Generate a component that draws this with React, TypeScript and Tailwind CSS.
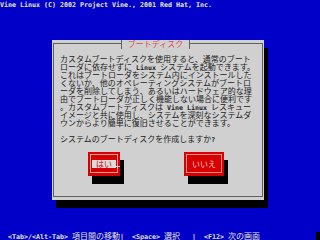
import React from "react";

const isLatin = (p: string) => /^[\x20-\x7e]+$/.test(p);

// text-mode line: ASCII runs are half-width (4px), everything else full-width (8px)
function Txt({ s, latin = "" }: { s: string; latin?: string }) {
  const parts = s.split(/([\x20-\x7e]+)/).filter(Boolean);
  return (
    <>
      {parts.map((p, i) =>
        isLatin(p) ? (
          <span
            key={i}
            className={`font-['DejaVu_Sans_Mono',monospace] text-[6.65px] leading-[8px] ${latin}`}
          >
            {p}
          </span>
        ) : (
          <span key={i} className="font-['Noto_Sans_CJK_JP',sans-serif] text-[8px] leading-[8px]">
            {p}
          </span>
        )
      )}
    </>
  );
}

const body = [
  "カスタムブートディスクを使用すると、通常のブート",
  "ローダに依存せずに Linux システムを起動できます。",
  "これはブートローダをシステム内にインストールした",
  "くないか、他のオペレーティングシステムがブートロ",
  "ーダを削除してしまう、あるいはハードウェア的な理",
  "由でブートローダが正しく機能しない場合に便利です",
  "。カスタムブートディスクは Vine Linux レスキュー",
  "イメージと共に使用し、システムを深刻なシステムダ",
  "ウンからより簡単に復旧させることができます。",
  "",
  "システムのブートディスクを作成しますか?",
];

export default function App() {
  return (
    <div className="w-[320px] h-[240px] bg-[#0000c8] flex flex-col overflow-hidden text-[8px] leading-[8px] font-['Noto_Sans_CJK_JP',sans-serif]">
      <div className="h-[8px] whitespace-pre text-[#ececc8]">
        <Txt s="Vine Linux (C) 2002 Project Vine., 2001 Red Hat, Inc." latin="font-bold" />
      </div>

      <div className="relative ml-[52px] mt-[32px] w-[212px] h-[160px] shrink-0 bg-[#d0d0d0] shadow-[4px_8px_0_0_#000] pt-[3px] pb-[3px] px-[1px]">
        <div className="h-full border border-[#606060]">
          <div className="pl-[6px] pt-[11px] text-[#202020]">
            {body.map((line, i) => (
              <div key={i} className="h-[8px] whitespace-pre">
                <Txt s={line} latin="font-bold" />
              </div>
            ))}
          </div>

          <div className="flex pl-[34px] gap-[64px] mt-[9px]">
            <div className="w-[32px] h-[24px] bg-[#d80000] shadow-[4px_8px_0_0_#000] pt-[2px] pb-[3px] px-[2px]">
              <div className="relative h-full border border-[#e8a0a0] flex items-center justify-center">
                <div className="h-[8px] px-[4px] bg-[#dcdcdc] text-[#d80000]">
                  はい
                </div>
                <div className="absolute right-[-3px] top-[11px] w-[4px] h-[1px] bg-[#dcdcdc]" />
              </div>
            </div>
            <div className="w-[40px] h-[24px] bg-[#d80000] shadow-[4px_8px_0_0_#000] pt-[2px] pb-[3px] px-[2px]">
              <div className="h-full border border-[#e89090] flex items-center justify-center">
                <div className="h-[8px] px-[4px] text-[#f4c8c8]">
                  いいえ
                </div>
              </div>
            </div>
          </div>
        </div>

        {/* title sits on the top border: ┤ ブートディスク ├ */}
        <div className="absolute left-[69px] top-0 w-[69px] h-[9px] border-x border-[#606060] bg-[#d0d0d0] flex justify-center">
          <span className="text-[#e04848]">ブートディスク</span>
        </div>
      </div>

      <div className="mt-auto h-[8px] flex">
        <div className="pl-[8px] whitespace-pre text-[#e4e4c8]">
          <Txt s="<Tab>/<Alt-Tab> 項目間の移動|  <Space> 選択   |  <F12> 次の画面" latin="font-bold" />
        </div>
        <div className="ml-auto w-[4px] h-full bg-black" />
      </div>
    </div>
  );
}
